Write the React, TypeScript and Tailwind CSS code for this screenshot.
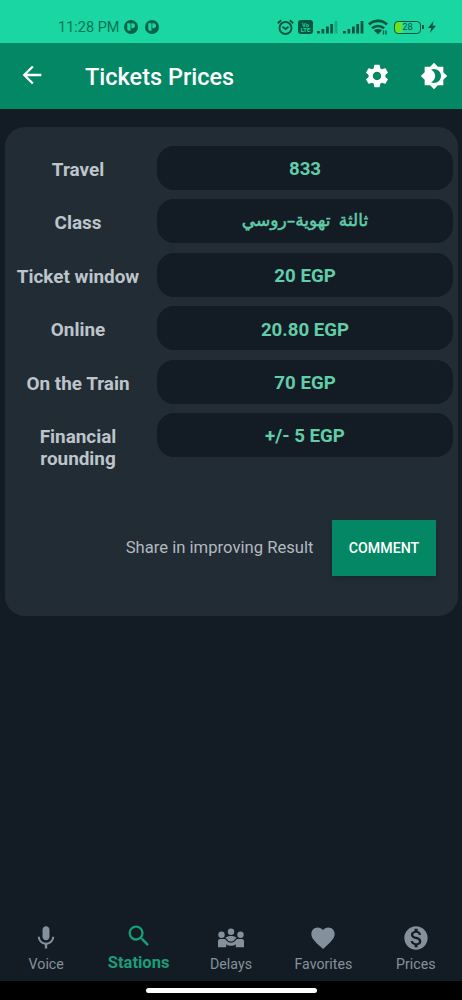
import React from "react";
import { MdArrowBack, MdSettings, MdMic, MdSearch, MdFavorite, MdMonetizationOn } from "react-icons/md";

const rows: { label: string; value: string; rtl?: boolean }[] = [
  { label: "Travel", value: "833" },
  { label: "Class", value: "ثالثة تهوية–روسي", rtl: true },
  { label: "Ticket window", value: "20 EGP" },
  { label: "Online", value: "20.80 EGP" },
  { label: "On the Train", value: "70 EGP" },
  { label: "Financial rounding", value: "+/- 5 EGP" },
];

function AppDot() {
  return (
    <svg width="14" height="14" viewBox="0 0 14 14">
      <circle cx="7" cy="7" r="7" fill="#076447" />
      <path d="M3.3 3.2h3.200v7.500H5c-1 0-1.700-.6-1.700-1.600zM7.300 3.2h1c1.700 0 2.700.9 2.700 2.500s-1 2.500-2.700 2.500h-1z" fill="#1ad6a3" />
    </svg>
  );
}

function Signal({ weak }: { weak?: boolean }) {
  return (
    <svg width="21" height="14" viewBox="0 0 21 14" fill="#08563f">
      <rect x="0" y="11" width="2.800" height="2.500" />
      <rect x="4.500" y="9" width="2.800" height="4.500" />
      <rect x="9" y="6.500" width="2.800" height="7" />
      <rect x="13.300" y="4" width="2.800" height="9.500" />
      <rect x="17.600" y="1" width="2.800" height="12.500" opacity={weak ? 0.3 : 1} />
    </svg>
  );
}

function StatusBar() {
  return (
    <div className="flex h-[43px] shrink-0 items-center bg-[#1ad6a3] pt-[11px] pl-[58px] text-[#08563f]">
      <span className="w-[66px] pt-px text-[14.500px] whitespace-nowrap text-[#087452]">11:28 PM</span>
      <div className="flex gap-[7px]">
        <AppDot />
        <AppDot />
      </div>
      <div className="ml-[118px] flex items-center">
        <svg width="17" height="17" viewBox="0 0 17 17" fill="none" stroke="#08563f" strokeWidth="1.900">
          <circle cx="8.500" cy="9" r="6" />
          <path d="M.8 4.300 4.200 1.300M16.200 4.300l-3.400-3M5.500 7.800l3 2.200 3-2.200" />
        </svg>
        <div className="ml-1 flex h-[14px] w-[15px] flex-col items-center justify-center rounded-[3px] bg-[#08563f] text-[6px] leading-[5.500px] font-bold text-[#1ad6a3]">
          <span>Vo</span>
          <span>LTE</span>
        </div>
        <div className="ml-[4px] flex gap-[5px]">
          <Signal weak />
          <Signal />
        </div>
        <svg className="ml-[4px]" width="20" height="16" viewBox="0 0 20 16" fill="none" stroke="#08563f" strokeWidth="2.700">
          <path d="M1 5.500c5-4.800 13-4.800 18 0M4 9.300c3.300-3.100 8.700-3.100 12 0" />
          <path d="m6 11.500c2.200-1.900 5.800-1.900 8 0l-4 4z" fill="#08563f" stroke="none" />
          <path d="M15.500 11.500v4M18 11.500v4" strokeWidth="1.300" />
        </svg>
        <div className="ml-[6px] flex h-[13px] w-[27px] items-center justify-center rounded-[4px] border-[1.500px] border-[#08563f] bg-gradient-to-r from-[#66e51d] from-20% to-[#1ad6a3] to-38% text-[9.500px] leading-none">28</div>
        <div className="ml-px h-[4px] w-[1.500px] bg-[#08563f]" />
        <svg className="ml-[4px]" width="8" height="12" viewBox="0 0 8 12" fill="#08563f"><path d="M5.500 0 0 6.900h3.200L2 12 8 4.800H4.600z" /></svg>
      </div>
    </div>
  );
}

function NightModeIcon() {
  return (
    <svg width="28" height="28" viewBox="0 0 24 24" fill="currentColor" fillRule="evenodd">
      <path d="M20 8.690V4h-4.690L12 .69 8.690 4H4v4.690L.69 12 4 15.310V20h4.690L12 23.310 15.310 20H20v-4.690L23.310 12 20 8.690zM12 18c-.89 0-1.740-.2-2.500-.55C11.560 16.500 13 14.420 13 12s-1.440-4.500-3.500-5.450C10.260 6.200 11.110 6 12 6c3.310 0 6 2.690 6 6s-2.690 6-6 6z" />
    </svg>
  );
}

function MeetingIcon() {
  return (
    <svg width="28" height="20" viewBox="0 0 28 20" fill="currentColor">
      <circle cx="14" cy="3.700" r="3.200" />
      <circle cx="4.500" cy="6.700" r="3.200" />
      <circle cx="23.500" cy="6.700" r="3.200" />
      <path d="M1 19.200V13.100C1 11.900 2 11 3.200 11h4.100c.8 0 1.400.3 1.900 1 1.100 1.800 2.900 2.800 4.800 2.800s3.700-1 4.800-2.800c.5-.7 1.100-1 1.900-1h4.100c1.200 0 2.200.9 2.200 2.100v6.100h-8.200v-2.900c-1.400 1-3.100 1.500-4.800 1.500s-3.400-.5-4.800-1.500v2.900z" />
      <path d="M8.300 9.800C9.800 8.600 11.800 8 14 8s4.200.6 5.700 1.800c-.8.400-1.400.9-1.900 1.700-.9 1.400-2.200 2.100-3.800 2.100s-2.900-.7-3.800-2.100c-.5-.8-1.100-1.300-1.900-1.700z" />
    </svg>
  );
}

const tabs = [
  { label: "Voice", icon: <MdMic size={28} /> },
  { label: "Stations", icon: <MdSearch size={28} />, active: true },
  { label: "Delays", icon: <MeetingIcon /> },
  { label: "Favorites", icon: <MdFavorite size={28} /> },
  { label: "Prices", icon: <MdMonetizationOn size={28} /> },
];

export default function App() {
  return (
    <div className="flex h-[1000px] w-[462px] flex-col overflow-hidden bg-[#131c24] font-['Roboto','Noto_Sans',sans-serif]">
      <StatusBar />
      <header className="flex h-[65.500px] shrink-0 items-center bg-[#038764] pr-[14px] pl-[18px] text-white">
        <MdArrowBack size={28} className="mb-[2px]" />
        <h1 className="ml-[39px] pt-[3px] text-[23.500px] font-medium">Tickets Prices</h1>
        <div className="ml-auto flex items-center gap-[29px]">
          <MdSettings size={28} />
          <NightModeIcon />
        </div>
      </header>

      <main className="flex-1 pt-[18.500px] pr-[4px] pl-[5px]">
        <section className="flex h-[489px] flex-col rounded-[20px] bg-[#222c35] pt-[19px]">
          <div className="flex flex-col gap-[9.400px]">
            {rows.map((r) => (
              <div key={r.label} className="flex h-[44px] items-start">
                <div className="w-[152px] pt-[13px] pr-[15px] pl-[9px] text-center text-[18.900px] leading-[22px] font-bold text-[#bdc4ca]">{r.label}</div>
                <div className="flex h-[44px] w-[296px] items-center justify-center rounded-[17px] bg-[#131c24] pt-[3px] text-[18.700px] font-bold text-[#61cda9]">
                  {r.rtl ? (
                    <span dir="rtl" className="pb-[4px] font-['DejaVu_Sans',sans-serif] text-[17px] font-normal [-webkit-text-stroke:0.500px_#61cda9] [word-spacing:3px]">{r.value}</span>
                  ) : (
                    <span>{r.value}</span>
                  )}
                </div>
              </div>
            ))}
          </div>
          <div className="mt-[63px] flex items-center justify-end pr-[22px]">
            <span className="mr-[18.500px] pt-[2px] text-[16.650px] text-[#b2b9bf]">Share in improving Result</span>
            <button className="h-[56px] w-[104px] bg-[#038764] pt-[2px] text-[14.200px] font-medium text-white shadow-md">COMMENT</button>
          </div>
        </section>
      </main>

      <nav className="grid h-[62px] shrink-0 grid-cols-5 text-[#84919c]">
        {tabs.map((t) =>
          t.active ? (
            <div key={t.label} className="flex flex-col items-center text-[#1a9d7b]">
              <div className="flex h-[33px] items-center">{t.icon}</div>
              <span className="text-[16.500px] leading-[22px] font-bold">{t.label}</span>
            </div>
          ) : (
            <div key={t.label} className="flex flex-col items-center">
              <div className="flex h-[34px] items-center pt-[4px]">{t.icon}</div>
              <span className="text-[14.200px] leading-[22px]">{t.label}</span>
            </div>
          )
        )}
      </nav>
      <div className="flex h-[19px] shrink-0 justify-center bg-black pt-[7px]">
        <div className="h-[5px] w-[171px] rounded-full bg-white" />
      </div>
    </div>
  );
}
